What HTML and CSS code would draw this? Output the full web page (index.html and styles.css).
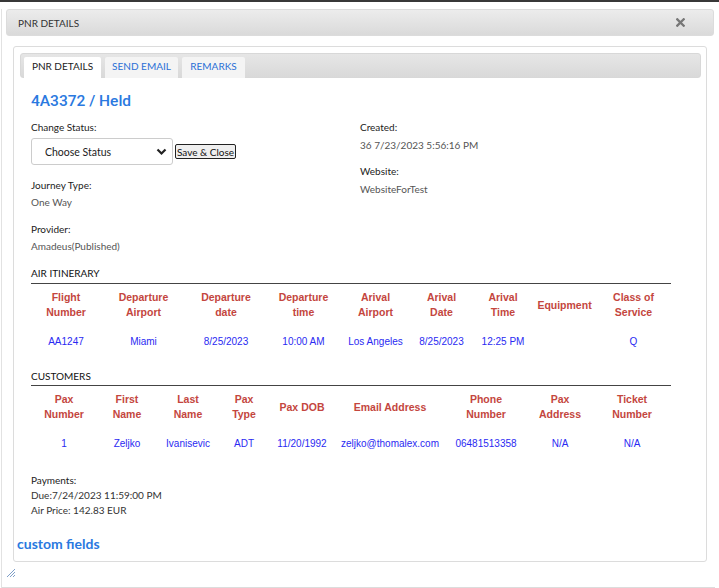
FILE: index.html
```html
<!DOCTYPE html>
<html>
<head>
<meta charset="utf-8">
<link rel="stylesheet" href="styles.css">
</head>
<body>
<div class="topbar"></div>
<div class="dialog">
  <div class="titlebar">
    <span class="title-text">PNR DETAILS</span>
    <span class="close" aria-label="close">
      <svg width="9" height="9" viewBox="0 0 9 9"><path d="M1.3 1.3 L7.7 7.7 M7.7 1.3 L1.3 7.7" stroke="#777" stroke-width="2.3" stroke-linecap="square"/></svg>
    </span>
  </div>
  <div class="panel">
    <div class="tabs">
      <div class="tab active">PNR DETAILS</div>
      <div class="tab">SEND EMAIL</div>
      <div class="tab">REMARKS</div>
    </div>
    <div class="content">
      <h1 class="pnr-title">4A3372 / Held</h1>
      <div class="info-grid">
        <div class="col">
          <div class="label">Change Status:</div>
          <div class="status-row">
            <div class="select-wrap">
              <select class="status-select"><option>Choose Status</option></select>
              <svg class="chev" width="11" height="8" viewBox="0 0 11 8"><path d="M1.5 1.5 L5.5 5.5 L9.5 1.5" fill="none" stroke="#222" stroke-width="2.2"/></svg>
            </div>
            <button class="save-btn">Save &amp; Close</button>
          </div>
          <div class="label gap">Journey Type:</div>
          <div class="value">One Way</div>
          <div class="label gap">Provider:</div>
          <div class="value">Amadeus(Published)</div>
        </div>
        <div class="col">
          <div class="label">Created:</div>
          <div class="value v2">36 7/23/2023 5:56:16 PM</div>
          <div class="label gap2">Website:</div>
          <div class="value v2">WebsiteForTest</div>
        </div>
      </div>

      <div class="section-head">AIR ITINERARY</div>
      <table class="grid">
        <colgroup>
          <col class="i1"><col class="i2"><col class="i3"><col class="i4"><col class="i5"><col class="i6"><col class="i7"><col class="i8"><col class="i9">
        </colgroup>
        <thead>
          <tr>
            <th>Flight<br>Number</th><th>Departure<br>Airport</th><th>Departure<br>date</th><th>Departure<br>time</th><th>Arival<br>Airport</th><th>Arival<br>Date</th><th>Arival<br>Time</th><th>Equipment</th><th>Class of<br>Service</th>
          </tr>
        </thead>
        <tbody>
          <tr>
            <td>AA1247</td><td>Miami</td><td>8/25/2023</td><td>10:00 AM</td><td>Los Angeles</td><td>8/25/2023</td><td>12:25 PM</td><td></td><td>Q</td>
          </tr>
        </tbody>
      </table>

      <div class="section-head s2">CUSTOMERS</div>
      <table class="grid">
        <colgroup>
          <col class="c1"><col class="c2"><col class="c3"><col class="c4"><col class="c5"><col class="c6"><col class="c7"><col class="c8"><col class="c9">
        </colgroup>
        <thead>
          <tr>
            <th>Pax<br>Number</th><th>First<br>Name</th><th>Last<br>Name</th><th>Pax<br>Type</th><th>Pax DOB</th><th>Email Address</th><th>Phone<br>Number</th><th>Pax<br>Address</th><th>Ticket<br>Number</th>
          </tr>
        </thead>
        <tbody>
          <tr>
            <td>1</td><td>Zeljko</td><td>Ivanisevic</td><td>ADT</td><td>11/20/1992</td><td>zeljko@thomalex.com</td><td>06481513358</td><td>N/A</td><td>N/A</td>
          </tr>
        </tbody>
      </table>

      <div class="payments">
        <div class="pay-label">Payments:</div>
        <div class="pay-line">Due:7/24/2023 11:59:00 PM</div>
        <div class="pay-line">Air Price: 142.83 EUR</div>
      </div>
    </div>
    <div class="custom-fields">custom fields</div>
  </div>
  <div class="footer">
    <svg class="resize" width="10" height="10" viewBox="0 0 10 10"><path d="M1 9 L9 1 M4 9 L9 4 M7 9 L9 7" stroke="#7f9fc8" stroke-width="1"/></svg>
  </div>
</div>
</body>
</html>
```

FILE: styles.css
```css
* { box-sizing: border-box; }
html, body { margin: 0; padding: 0; background: #fff; }
body {
  font-family: Lato, "Open Sans", Arial, sans-serif;
  color: #333;
  width: 719px;
  height: 588px;
  overflow: hidden;
}
.topbar { height: 2px; background: #383838; }
.dialog {
  border-left: 1px solid #e2e2e2;
  height: 586px;
  margin-left: 1px;
}
.titlebar {
  margin: 7px 5px 0 4px;
  height: 27px;
  background: linear-gradient(#ececec, #dadada);
  border: 1px solid #dcdcdc;
  border-radius: 3px;
  display: flex;
  align-items: center;
  justify-content: space-between;
  padding: 0 28px 0 11px;
}
.title-text { font-size: 10px; color: #333; letter-spacing: 0; }
.close { display: flex; align-items: center; }
.panel {
  margin: 10px 12px 0 11px;
  border: 1px solid #dcdcdc;
  border-radius: 3px;
  padding: 6px 5px 5px 3px;
  height: 516px;
  display: flex;
  flex-direction: column;
}
.tabs {
  margin-left: 3px;
  height: 25px;
  background: linear-gradient(#e6e6e6, #d9d9d9);
  border: 1px solid #d8d8d8;
  border-radius: 3px;
  display: flex;
  align-items: flex-end;
  gap: 4px;
  padding: 0 0 0 3px;
}
.tab {
  height: 21px;
  padding: 0 0 3px 0;
  display: flex;
  align-items: center;
  justify-content: center;
  white-space: nowrap;
  font-size: 10px;
  color: #2a6fd6;
  background: #f4f4f4;
  border-radius: 2px 2px 0 0;
  margin-bottom: -1px;
}
.tab.active { background: #fff; color: #222; }
.tab:nth-child(1) { width: 77px; }
.tab:nth-child(2) { width: 73px; }
.tab:nth-child(3) { width: 63px; }
.content { padding: 0 0 0 14px; }
.pnr-title {
  margin: 13px 0 0 0;
  font-family: Roboto, Arial, sans-serif;
  font-weight: 500;
  font-size: 15.5px;
  line-height: 20px;
  color: #2a79e0;
}
.info-grid {
  display: grid;
  grid-template-columns: 329px 1fr;
  margin-top: 9px;
}
.label { font-size: 10px; line-height: 14px; color: #222; }
.value { font-size: 10px; line-height: 14px; color: #555; margin-top: 3px; }
.value.v2 { margin-top: 4px; }
.label.gap { margin-top: 13px; }
.label.gap2 { margin-top: 12px; }
.status-row { display: flex; align-items: center; margin-top: 4px; }
.select-wrap { position: relative; width: 142px; height: 27px; }
.status-select {
  appearance: none;
  -webkit-appearance: none;
  width: 142px;
  height: 27px;
  border: 1px solid #ccc;
  border-radius: 3px;
  background: #fff;
  font-family: Lato, Arial, sans-serif;
  font-size: 10.5px;
  color: #222;
  padding: 0 0 0 13px;
}
.chev { position: absolute; right: 6px; top: 10px; }
.save-btn {
  margin-left: 2px;
  height: 15px;
  padding: 0 1px;
  border: 1px solid #222;
  border-radius: 2px;
  background: #efefef;
  font-family: Lato, Arial, sans-serif;
  font-size: 10px;
  line-height: 12px;
  color: #111;
}
.section-head {
  margin-top: 13px;
  width: 640px;
  font-size: 10px;
  line-height: 14px;
  color: #111;
  padding-bottom: 3px;
  border-bottom: 1px solid #444;
}
.section-head.s2 { margin-top: 20px; padding-bottom: 2px; }
.grid {
  width: 640px;
  table-layout: fixed;
  border-collapse: collapse;
}
.grid th {
  font-family: "Liberation Sans", Arial, sans-serif;
  font-weight: bold;
  font-size: 10.5px;
  line-height: 15px;
  color: #c4463e;
  padding: 6px 0 7px 0;
  text-align: center;
  vertical-align: middle;
}
.grid td {
  font-family: "Liberation Sans", Arial, sans-serif;
  font-size: 10px;
  line-height: 14px;
  color: #2a2af2;
  padding: 8px 0 0 0;
  text-align: center;
  white-space: nowrap;
}
.i1 { width: 70px; } .i2 { width: 85px; } .i3 { width: 80px; } .i4 { width: 75px; } .i5 { width: 69px; }
.i6 { width: 63px; } .i7 { width: 60px; } .i8 { width: 63px; } .i9 { width: 75px; }
.c1 { width: 66px; } .c2 { width: 60px; } .c3 { width: 62px; } .c4 { width: 50px; } .c5 { width: 66px; }
.c6 { width: 110px; } .c7 { width: 82px; } .c8 { width: 66px; } .c9 { width: 78px; }
.payments { margin-top: 21px; }
.pay-label { font-size: 10px; line-height: 16px; color: #222; }
.pay-line { font-size: 10px; line-height: 15px; color: #333; }
.custom-fields {
  margin-top: 17px;
  font-family: Lato, Arial, sans-serif;
  font-weight: bold;
  font-size: 14px;
  line-height: 18px;
  color: #2a79e0;
}
.footer {
  height: 26px;
  border-bottom: 1px solid #dcdcdc;
  padding: 6px 0 0 4px;
  margin-right: 4px;
}
.resize { display: block; }
```
